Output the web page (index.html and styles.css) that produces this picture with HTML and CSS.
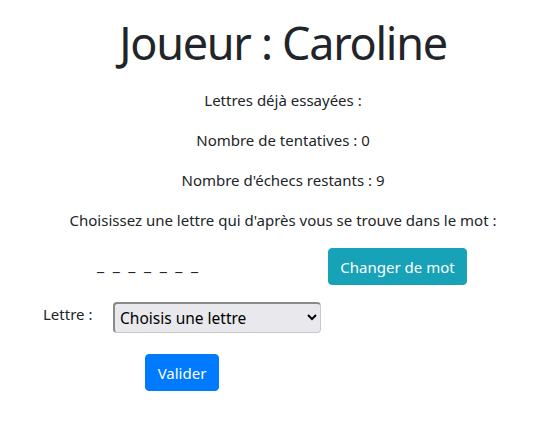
FILE: index.html
```html
<!DOCTYPE html>
<html lang="fr">
<head>
<meta charset="utf-8">
<link rel="stylesheet" href="styles.css">
</head>
<body>
<div class="page">
  <h1 class="title">Joueur : Caroline</h1>
  <p class="info">Lettres déjà essayées :</p>
  <p class="info">Nombre de tentatives : 0</p>
  <p class="info">Nombre d'échecs restants : 9</p>
  <p class="info">Choisissez une lettre qui d'après vous se trouve dans le mot :</p>
  <div class="word-row">
    <span class="word">_ _ _ _ _ _ _</span>
    <button class="btn btn-info" type="button">Changer de mot</button>
  </div>
  <form class="guess">
    <div class="field">
      <label class="label" for="lettre">Lettre :</label>
      <select class="select" id="lettre">
        <option>Choisis une lettre</option>
      </select>
    </div>
    <button class="btn btn-primary" type="button">Valider</button>
  </form>
</div>
</body>
</html>
```

FILE: styles.css
```css
* { box-sizing: border-box; }
html, body { margin: 0; padding: 0; background: #fff; }
body {
  font-family: "Noto Sans", "Open Sans", sans-serif;
  font-size: 15px;
  line-height: 24px;
  color: #212529;
}
.page { width: 548px; }
.title {
  margin: 10px 0 12px;
  text-align: center;
  font-size: 45px;
  font-weight: 400;
  letter-spacing: -1.3px;
  line-height: 66px;
  padding-left: 18px;
}
.info {
  margin: 0 0 16px;
  text-align: center;
  padding-left: 18px;
}
.word-row {
  display: flex;
  align-items: center;
  margin-top: 3px;
}
.word {
  width: 328px;
  padding-left: 97px;
  padding-bottom: 4px;
  font-size: 16px;
  letter-spacing: 2.2px;
}
.btn {
  font-family: inherit;
  font-size: 15px;
  line-height: 24px;
  border: 1px solid transparent;
  border-radius: 4px;
  color: #fff;
  cursor: pointer;
  white-space: nowrap;
}
.btn-info {
  background: #17a2b8;
  border-color: #17a2b8;
  padding: 6px 0;
  width: 139px;
  height: 37px;
}
.btn-primary {
  background: #007bff;
  border-color: #007bff;
  padding: 6px 0;
  width: 74px;
  height: 37px;
}
.guess {
  margin-top: 17px;
  display: flex;
  flex-direction: column;
  align-items: flex-start;
}
.field {
  display: flex;
  align-items: flex-start;
  padding-left: 43px;
}
.label {
  width: 70px;
  line-height: 24px;
}
.select {
  width: 208px;
  height: 31px;
  font-family: inherit;
  font-size: 15.5px;
  color: #000;
  background: #e9e9ed;
  border-style: solid;
  border-width: 2px 1px 1px 2px;
  border-color: #8a8a8a #c8c8cc #c8c8cc #8a8a8a;
  border-radius: 4px;
  padding: 0 1px;
}
.guess .btn-primary { margin: 21px 0 0 145px; }
```
